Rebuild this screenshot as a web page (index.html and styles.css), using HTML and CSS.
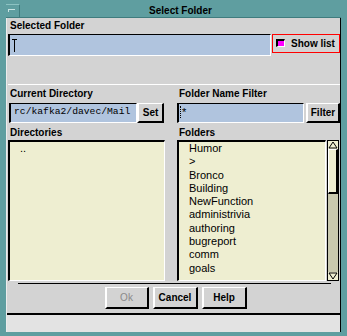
FILE: index.html
```html
<!DOCTYPE html>
<html lang="en">
<head>
    <meta charset="UTF-8">
    <title>Select Folder</title>
    <link rel="stylesheet" href="styles.css">
</head>
<body>
    <div class="window">
        <div class="titlebar">
            <div class="menu-btn"><span class="menu-mark"></span></div>
            <div class="title">Select Folder</div>
        </div>
        <div class="client">
            <div class="dialog">
                <div class="label">Selected Folder</div>
                <div class="row">
                    <div class="field selected"><span class="caret"></span></div>
                    <div class="showlist"><span class="check"></span>Show list</div>
                </div>
                <div class="sep"></div>

                <div class="columns">
                    <div class="col left">
                        <div class="label">Current Directory</div>
                        <div class="field-row">
                            <div class="field dir">rc/kafka2/davec/Mail</div>
                            <button class="btn set">Set</button>
                        </div>
                        <div class="label">Directories</div>
                        <div class="listbox">
                            <div class="item">..</div>
                        </div>
                    </div>

                    <div class="col right">
                        <div class="label">Folder Name Filter</div>
                        <div class="field-row">
                            <div class="field filter"><span class="dcaret"></span>*</div>
                            <button class="btn filter-btn">Filter</button>
                        </div>
                        <div class="label">Folders</div>
                        <div class="list-wrap">
                            <div class="listbox folders">
                                <div class="item">Humor</div>
                                <div class="item">&gt;</div>
                                <div class="item">Bronco</div>
                                <div class="item">Building</div>
                                <div class="item">NewFunction</div>
                                <div class="item">administrivia</div>
                                <div class="item">authoring</div>
                                <div class="item">bugreport</div>
                                <div class="item">comm</div>
                                <div class="item">goals</div>
                            </div>
                            <div class="scrollbar">
                                <div class="arrow">
                                    <svg width="10" height="8" viewBox="0 0 10 8"><polygon points="5,1 9,7 1,7" fill="#eeeed1" stroke="#000" stroke-width="1"/></svg>
                                </div>
                                <div class="thumb"></div>
                                <div class="trough"></div>
                                <div class="arrow">
                                    <svg width="10" height="8" viewBox="0 0 10 8"><polygon points="1,1 9,1 5,7" fill="#eeeed1" stroke="#000" stroke-width="1"/></svg>
                                </div>
                            </div>
                        </div>
                    </div>
                </div>

                <div class="sep2"></div>
                <div class="buttons">
                    <button class="btn big disabled">Ok</button>
                    <button class="btn big">Cancel</button>
                    <button class="btn big">Help</button>
                </div>
            </div>
            <div class="status"></div>
        </div>
    </div>
</body>
</html>
```

FILE: styles.css
```css
* {
    box-sizing: border-box;
}

body {
    margin: 0;
    background-color: #5f9ea0;
    font-family: "Liberation Sans", Arial, sans-serif;
    color: #000;
}

.window {
    width: 347px;
    height: 336px;
    padding: 0 6px 4px 6px;
    display: flex;
    flex-direction: column;
}

/* title bar */
.titlebar {
    height: 18px;
    padding-top: 4px;
    display: flex;
    border-bottom: 1px solid #3f7c7e;
}

.menu-btn {
    width: 14px;
    border-right: 1px solid #3f7c7e;
    border-top: 1px solid #8cc2c2;
    position: relative;
}

.menu-mark {
    position: absolute;
    left: 2px;
    top: 4px;
    width: 7px;
    height: 3px;
    border-top: 1px solid #c9e3e3;
    border-left: 1px solid #c9e3e3;
}

.title {
    flex: 1;
    text-align: center;
    font-size: 10px;
    font-weight: bold;
    line-height: 13px;
}

/* client area */
.client {
    flex: 1;
    display: flex;
    flex-direction: column;
    background-color: #d3d3d3;
    border-left: 1px solid #ececec;
    border-right: 1px solid #000;
}

.dialog {
    flex: 1;
    padding: 1px 0 0 1px;
    display: flex;
    flex-direction: column;
}

.label {
    font-size: 10px;
    font-weight: bold;
    line-height: 13px;
    padding-left: 2px;
    height: 13px;
}

.row {
    display: flex;
    margin-top: 2px;
    height: 22px;
}

.field {
    background-color: #b0c4de;
    border-style: solid;
    border-color: #000 #fff #fff #000;
    border-width: 1px 1px 1px 2px;
}

.field.selected {
    width: 263px;
    padding: 3px 0 0 2px;
}

.caret {
    display: inline-block;
    width: 5px;
    height: 13px;
    border-top: 1px solid #000;
    position: relative;
}

.caret::after {
    content: "";
    position: absolute;
    left: 2px;
    top: 0;
    height: 12px;
    border-left: 1px solid #000;
}

.showlist {
    width: 68px;
    height: 19px;
    margin-left: 1px;
    border: 1px solid #ff0000;
    display: flex;
    align-items: center;
    padding-left: 3px;
    font-size: 10px;
    font-weight: bold;
}

.check {
    width: 9px;
    height: 8px;
    margin-right: 6px;
    margin-top: -1px;
    background-color: #ff00ff;
    border-style: solid;
    border-color: #000 #fff #fff #000;
    border-width: 2px 1px 1px 2px;
}

.sep {
    height: 1px;
    margin-top: 28px;
    background-color: #fff;
}

.columns {
    display: flex;
    gap: 12px;
}

.col {
    display: flex;
    flex-direction: column;
}

.col .label {
    margin-top: 2px;
}

.col .label + .listbox,
.col .label + .list-wrap {
    margin-top: 1px;
}

.left {
    width: 157px;
}

.right {
    width: 163px;
}

.field-row {
    display: flex;
    margin-top: 3px;
    height: 20px;
    margin-bottom: 1px;
}

.field.dir {
    width: 128px;
    margin-left: 1px;
    font-family: "Liberation Mono", "Courier New", monospace;
    font-size: 9.7px;
    line-height: 16px;
    padding-left: 3px;
    overflow: hidden;
    white-space: nowrap;
}

.field.filter {
    width: 127px;
    font-size: 11px;
    line-height: 16px;
    padding-left: 1px;
}

.dcaret {
    display: inline-block;
    height: 12px;
    vertical-align: -2px;
    border-left: 1px dotted #000;
    margin-right: 1px;
}

.btn {
    font-family: "Liberation Sans", Arial, sans-serif;
    font-size: 10px;
    font-weight: bold;
    color: #000;
    background-color: #d3d3d3;
    border-style: solid;
    border-color: #fff #000 #000 #fff;
    border-width: 1px 2px 2px 2px;
    padding: 0;
    height: 20px;
}

.btn.set {
    width: 27px;
}

.btn.filter-btn {
    width: 34px;
    margin-left: 2px;
}

.listbox {
    height: 141px;
    background-color: #eeeed1;
    border-style: solid;
    border-color: #000 #fff #fff #000;
    border-width: 2px 1px 1px 2px;
    padding-top: 0;
    overflow: hidden;
}

.item {
    font-size: 11px;
    line-height: 13.3px;
    padding-left: 10px;
    white-space: nowrap;
}

.list-wrap {
    display: flex;
    height: 141px;
}

.listbox.folders {
    width: 149px;
    padding-left: 0;
}

.scrollbar {
    width: 12px;
    margin-left: 1px;
    border: 1px solid #000;
    display: flex;
    flex-direction: column;
    background-color: #c9c9ae;
}

.arrow {
    height: 8px;
    display: flex;
    justify-content: center;
    background-color: #eeeed1;
}

.arrow svg {
    display: block;
}

.thumb {
    height: 45px;
    background-color: #eeeed1;
    border-style: solid;
    border-color: #fff #000 #000 #fff;
    border-width: 1px 2px 2px 1px;
}

.trough {
    flex: 1;
}

.sep2 {
    height: 1px;
    margin: 2px 9px 0 10px;
    background-color: #000;
}

.buttons {
    display: flex;
    justify-content: center;
    gap: 4px;
    margin-top: 3px;
    padding-left: 3px;
}

.btn.big {
    height: 22px;
    width: 45px;
    border-width: 1px 2px 2px 2px;
}

.btn.disabled {
    width: 44px;
    color: #8a8a8a;
    font-weight: normal;
}

.status {
    height: 19px;
    border-top: 2px solid #000;
    background-color: #e3e3e3;
}
```
